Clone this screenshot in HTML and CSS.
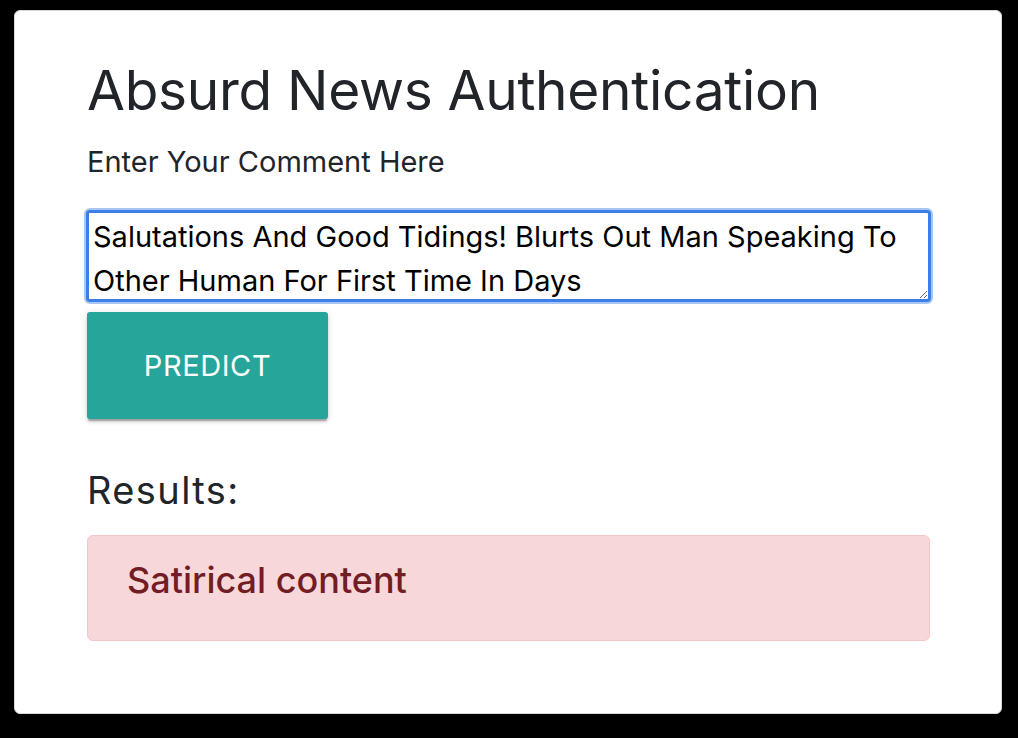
FILE: index.html
```html
<!DOCTYPE html>
<html>
<head>
<meta charset="utf-8">
<link rel="stylesheet" href="styles.css">
</head>
<body>
<div class="card">
  <h1 class="title">Absurd News Authentication</h1>
  <label class="label" for="comment">Enter Your Comment Here</label>
  <textarea id="comment" class="comment">Salutations And Good Tidings! Blurts Out Man Speaking To Other Human For First Time In Days</textarea>
  <div class="actions"><button class="predict">PREDICT</button></div>
  <h4 class="results">Results:</h4>
  <div class="alert">Satirical content</div>
</div>
</body>
</html>
```
FILE: styles.css
```css
html, body {
  margin: 0;
  padding: 0;
  background: #000;
}
body {
  padding: 10px 16px 0 14px;
  font-family: Inter, "Liberation Sans", sans-serif;
  color: #212529;
}
.card {
  box-sizing: border-box;
  width: 988px;
  height: 704px;
  background: #fff;
  border: 1px solid #d6d6d6;
  border-radius: 6px;
  padding: 46px 71px 0 72px;
  display: flex;
  flex-direction: column;
  align-items: stretch;
}
.title {
  margin: 0;
  font-size: 55px;
  font-weight: 400;
  line-height: 66px;
  letter-spacing: -0.3px;
}
.label {
  margin-top: 17px;
  font-size: 29px;
  line-height: 43px;
}
.comment {
  box-sizing: border-box;
  margin: 27px -1px 0 -1px;
  height: 92px;
  padding: 2px 4px;
  font-family: Inter, "Liberation Sans", sans-serif;
  font-size: 29px;
  line-height: 44px;
  color: #000;
  border: 3px solid #3d7fe6;
  border-radius: 4px;
  box-shadow: 0 0 0 2px #a8c6f3;
  outline: none;
  resize: vertical;
  overflow: hidden;
}
.actions {
  margin-top: 10px;
  display: flex;
}
.predict {
  width: 241px;
  height: 107px;
  border: none;
  border-radius: 3px;
  background: #26a69a;
  color: #fff;
  font-family: Inter, "Liberation Sans", sans-serif;
  font-size: 29px;
  letter-spacing: 0.6px;
  box-shadow: 0 3px 3px 0 rgba(0,0,0,.14), 0 1px 7px 0 rgba(0,0,0,.12), 0 3px 1px -1px rgba(0,0,0,.2);
}
.results {
  margin: 49px 0 0;
  font-size: 38px;
  font-weight: 400;
  line-height: 44px;
  letter-spacing: 1.4px;
}
.alert {
  box-sizing: border-box;
  margin-top: 23px;
  height: 106px;
  padding: 23px 39px;
  background: #f8d7da;
  border: 1px solid #f5c6cb;
  border-radius: 6px;
  color: #721c24;
  font-size: 36px;
  font-weight: 500;
  line-height: 43px;
}
```
